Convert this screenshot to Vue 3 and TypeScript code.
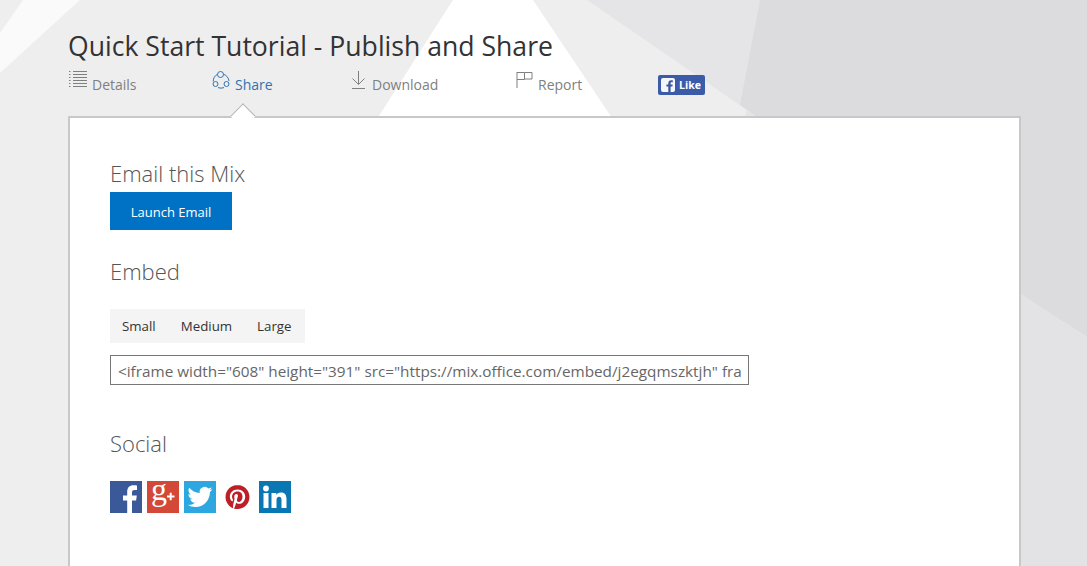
<template>
  <div class="page">
    <svg class="backdrop" viewBox="0 0 1087 566" preserveAspectRatio="none" aria-hidden="true">
      <rect width="1087" height="566" fill="#eeeeef" />
      <polygon points="23,0 80,0 0,73 0,33" fill="#fafafa" />
      <polygon points="453,0 533,0 620,130 370,130" fill="#ffffff" />
      <polygon points="587,0 770,0 745,117 757,117" fill="#e5e5e7" />
      <polygon points="760,0 1087,0 1087,337 1020,294 757,117 740,105" fill="#dcdcde" />
      <polygon points="1020,294 1087,337 1087,566 1020,566" fill="#e3e3e5" />
    </svg>

    <main class="content">
      <h1 class="title">Quick Start Tutorial - Publish and Share</h1>

      <nav class="tabs">
        <a v-for="tab in tabs" :key="tab.label" class="tab" :class="[tab.cls, { active: tab.label === 'Share' }]">
          <svg class="tab-icon" width="22" height="22" viewBox="0 0 22 22" fill="none" stroke="currentColor" stroke-width="1">
            <template v-if="tab.label === 'Details'">
              <path d="M1 2.5h2.5M1 5.5h2.5M1 8.5h2.5M1 11.5h2.5M1 14.5h2.5M1 17.5h2.5" stroke-dasharray="1.5 1" />
              <path d="M5 2.5h14M5 5.5h14M5 8.5h14M5 11.5h14M5 14.5h14M5 17.5h14" />
            </template>
            <template v-else-if="tab.label === 'Share'">
              <path d="M5.6 5.2a8.4 8.4 0 0 0-4.4 7.2M11.4 5.2a8.4 8.4 0 0 1 5.6 6.8M6 18.6a8.4 8.4 0 0 0 6 0" />
              <circle cx="8.5" cy="5.5" r="3" />
              <circle cx="3.5" cy="15" r="2.5" />
              <circle cx="14.5" cy="15" r="2.5" />
            </template>
            <template v-else-if="tab.label === 'Download'">
              <path d="M7.5 2v13M1.5 9.5l6 6 6-6M1 19.5h13" />
            </template>
            <template v-else>
              <path d="M1 3v16M1 3.5h7.5v7H1M8.5 3.5h7.5v6.5H8.5" />
            </template>
          </svg>
          <span>{{ tab.label }}</span>
        </a>
        <span class="fb-like">
          <svg width="14" height="14" viewBox="0 0 14 14">
            <rect width="14" height="14" rx="2" fill="#f4f6fb" />
            <path d="M9.6 14V8.6h1.8l.3-2.1H9.6V5.2c0-.6.2-1 1-1h1.2V2.3c-.2 0-.9-.1-1.7-.1-1.7 0-2.8 1-2.8 2.9v1.4H5.4v2.1h1.9V14z" fill="#3b5998" />
          </svg>
          <span>Like</span>
        </span>
      </nav>

      <section class="card">
        <span class="pointer"></span>

        <h2 class="heading">Email this Mix</h2>
        <button class="launch" type="button">Launch Email</button>

        <h2 class="heading embed-heading">Embed</h2>
        <div class="sizes">
          <button v-for="size in sizes" :key="size" class="size" type="button">{{ size }}</button>
        </div>
        <input class="embed-code" type="text" readonly :value="embedCode" />

        <h2 class="heading social-heading">Social</h2>
        <div class="social">
          <svg class="s-icon" viewBox="0 0 32 32">
            <rect width="32" height="32" fill="#3b5998" />
            <path d="M22 32V19.4h4.1l.7-5h-4.8v-3c0-1.4.5-2.5 2.5-2.5h2.5V4.4c-.5 0-2-.2-3.6-.2-3.7 0-6.2 2.2-6.2 6.4v3.8h-4.2v5h4.2V32z" fill="#fff" />
          </svg>
          <svg class="s-icon s-gplus" viewBox="0 0 32 32">
            <rect width="32" height="32" fill="#d34836" />
            <text x="4" y="19" class="gplus">g</text>
            <path d="M20 15.5h7.5M23.7 11.7v7.6" stroke="#fff" stroke-width="2" />
          </svg>
          <svg class="s-icon" viewBox="0 0 32 32">
            <rect width="32" height="32" fill="#2ca7e0" />
            <g transform="translate(3.5 3.5) scale(1.04)">
              <path d="M23.953 4.57a10 10 0 01-2.825.775 4.958 4.958 0 002.163-2.723c-.951.555-2.005.959-3.127 1.184a4.92 4.92 0 00-8.384 4.482C7.69 8.095 4.067 6.13 1.64 3.162a4.822 4.822 0 00-.666 2.475c0 1.71.87 3.213 2.188 4.096a4.904 4.904 0 01-2.228-.616v.06a4.923 4.923 0 003.946 4.827 4.996 4.996 0 01-2.212.085 4.936 4.936 0 004.604 3.417 9.867 9.867 0 01-6.102 2.105c-.39 0-.779-.023-1.17-.067a13.995 13.995 0 007.557 2.209c9.053 0 13.998-7.496 13.998-13.985 0-.21 0-.42-.015-.63A9.935 9.935 0 0024 4.59z" fill="#fff" />
            </g>
          </svg>
          <svg class="s-icon s-pin" viewBox="0 0 33 32">
            <g transform="translate(4.5 4)">
              <path d="M12.017 0C5.396 0 .029 5.367.029 11.987c0 5.079 3.158 9.417 7.618 11.162-.105-.949-.199-2.403.041-3.439.219-.937 1.406-5.957 1.406-5.957s-.359-.72-.359-1.781c0-1.663.967-2.911 2.168-2.911 1.024 0 1.518.769 1.518 1.688 0 1.029-.653 2.567-.992 3.992-.285 1.193.6 2.165 1.775 2.165 2.128 0 3.768-2.245 3.768-5.487 0-2.861-2.063-4.869-5.008-4.869-3.41 0-5.409 2.562-5.409 5.199 0 1.033.394 2.143.889 2.741.099.12.112.225.085.345-.09.375-.293 1.199-.334 1.363-.053.225-.172.271-.401.165-1.495-.69-2.433-2.878-2.433-4.646 0-3.776 2.748-7.252 7.92-7.252 4.158 0 7.392 2.967 7.392 6.923 0 4.135-2.607 7.462-6.233 7.462-1.214 0-2.354-.629-2.758-1.379l-.749 2.848c-.269 1.045-1.004 2.352-1.498 3.146 1.123.345 2.306.535 3.55.535 6.607 0 11.985-5.365 11.985-11.987C23.97 5.39 18.592.026 11.985.026L12.017 0z" fill="#bd1f27" />
            </g>
          </svg>
          <svg class="s-icon" viewBox="0 0 32 32">
            <rect width="32" height="32" fill="#0a77b5" />
            <rect x="4.5" y="12" width="5" height="15" fill="#fff" />
            <circle cx="7" cy="7.5" r="2.9" fill="#fff" />
            <path d="M12.5 12h4.8v2.1c.8-1.3 2.3-2.5 4.6-2.5 4.1 0 5.6 2.6 5.6 6.6V27h-5v-8c0-1.8-.5-3.2-2.3-3.2-1.9 0-2.7 1.4-2.7 3.2v8h-5z" fill="#fff" />
          </svg>
        </div>
      </section>
    </main>
  </div>
</template>

<script setup lang="ts">
interface Tab {
  label: string
  cls: string
}

const tabs: Tab[] = [
  { label: 'Details', cls: 'tab-details' },
  { label: 'Share', cls: 'tab-share' },
  { label: 'Download', cls: 'tab-download' },
  { label: 'Report', cls: 'tab-report' },
]

const sizes: string[] = ['Small', 'Medium', 'Large']

const embedCode =
  '<iframe width="608" height="391" src="https://mix.office.com/embed/j2egqmszktjh" frameborder="0" allowfullscreen></iframe>'
</script>

<style>
html,
body {
  margin: 0;
  overflow: hidden;
}
</style>

<style scoped>
.page {
  position: relative;
  width: 1087px;
  height: 566px;
  overflow: hidden;
  font-family: "Open Sans", "Noto Sans", sans-serif;
}

.backdrop {
  position: absolute;
  inset: 0;
  width: 100%;
  height: 100%;
}

.content {
  position: relative;
  padding: 27px 66px 0 68px;
}

.title {
  margin: 0;
  font-size: 26.6px;
  line-height: 38px;
  font-weight: 400;
  color: #333;
}

.tabs {
  display: flex;
  align-items: flex-start;
  height: 47px;
  margin-top: 4px;
}

.tab {
  display: flex;
  align-items: flex-start;
  font-size: 14px;
  line-height: 20px;
  color: #808080;
}

.tab span {
  margin-top: 6px;
}

.tab-icon {
  flex: none;
}

.tab-details {
  width: 144px;
  gap: 2px;
}

.tab-share {
  width: 139px;
  gap: 1px;
}

.tab-download {
  width: 165px;
}

.tab-download span {
  margin-left: -1px;
}

.tab-report {
  width: 142px;
}

.active {
  color: #2f74b0;
}

.fb-like {
  display: flex;
  align-items: center;
  gap: 4px;
  box-sizing: border-box;
  width: 47px;
  height: 20px;
  margin-top: 6px;
  padding-left: 3px;
  border-radius: 2px;
  background: #3b5ba8;
  color: #fff;
  font-size: 10.5px;
  font-weight: 700;
}

.card {
  position: relative;
  box-sizing: border-box;
  width: 953px;
  height: 600px;
  padding: 39px 40px 0;
  border: 2px solid #c8c8c8;
  border-bottom: 0;
  background: #fff;
}

.pointer {
  position: absolute;
  top: -11px;
  left: 164px;
  width: 18px;
  height: 18px;
  box-sizing: border-box;
  background: #fff;
  border-top: 1px solid #b5b5b5;
  border-left: 1px solid #b5b5b5;
  transform: rotate(45deg);
}

.heading {
  margin: 0;
  font-size: 22px;
  line-height: 32px;
  font-weight: 300;
  color: #555;
}

.launch {
  display: block;
  width: 122px;
  height: 38px;
  margin-top: 3px;
  padding: 2px 0 0;
  border: 0;
  background: #0072c6;
  color: #fff;
  font: 13px "Open Sans", "Noto Sans", sans-serif;
}

.embed-heading {
  margin-top: 25px;
}

.sizes {
  display: flex;
  gap: 25px;
  width: 195px;
  height: 34px;
  margin-top: 22px;
  padding-left: 12px;
  box-sizing: border-box;
  background: #f4f4f4;
}

.size {
  padding: 0;
  border: 0;
  background: none;
  color: #333;
  font: 13.3px "Open Sans", "Noto Sans", sans-serif;
}

.embed-code {
  display: block;
  box-sizing: border-box;
  width: 639px;
  height: 30px;
  margin-top: 12px;
  padding: 1px 7px 0;
  border: 1px solid #777;
  border-radius: 0;
  outline: 0;
  color: #666;
  font: 15.3px "Open Sans", "Noto Sans", sans-serif;
}

.social-heading {
  margin-top: 42px;
}

.social {
  display: flex;
  gap: 5px;
  margin-top: 22px;
}

.s-icon {
  width: 32px;
  height: 32px;
  flex: none;
}

.s-pin {
  width: 33px;
}

.s-gplus {
  overflow: visible;
}

.gplus {
  font-family: "Liberation Serif", serif;
  font-size: 32px;
  fill: #fff;
}
</style>
